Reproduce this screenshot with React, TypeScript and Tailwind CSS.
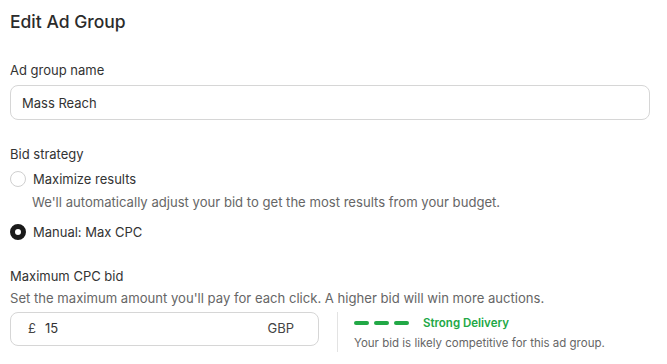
import { useState } from "react";

export default function App() {
  const [name, setName] = useState("Mass Reach");
  const [strategy, setStrategy] = useState<"auto" | "manual">("manual");
  const [bid, setBid] = useState("15");

  return (
    <main
      className="w-[667px] h-[364px] overflow-hidden bg-white px-[10px] pt-[10px] text-[#333333]"
      style={{ fontFamily: "Inter, 'Noto Sans', sans-serif" }}
    >
      <h1 className="text-[17.5px] leading-[24px] font-medium text-[#2b2b2b]">Edit Ad Group</h1>

      <label className="block mt-[27px] text-[13px] leading-[18px]">Ad group name</label>
      <input
        value={name}
        onChange={e => setName(e.target.value)}
        className="mt-[6px] w-[640px] h-[35px] rounded-[8px] border border-[#d6d6d6] px-[11px] text-[13px] outline-none"
      />

      <p className="mt-[25px] text-[13px] leading-[18px]">Bid strategy</p>

      <div className="mt-[7px] flex items-center gap-[7px] cursor-pointer" onClick={() => setStrategy("auto")}>
        <span
          className={
            strategy === "auto"
              ? "w-[16px] h-[16px] rounded-full border-[5px] border-[#1a1a1a]"
              : "w-[16px] h-[16px] rounded-full border border-[#cfcfcf]"
          }
        />
        <span className="text-[13px] leading-[18px]">Maximize results</span>
      </div>
      <p className="mt-[5px] ml-[22px] text-[13.1px] leading-[18px] text-[#666666]">
        We'll automatically adjust your bid to get the most results from your budget.
      </p>

      <div className="mt-[12px] flex items-center gap-[7px] cursor-pointer" onClick={() => setStrategy("manual")}>
        <span
          className={
            strategy === "manual"
              ? "w-[16px] h-[16px] rounded-full border-[5px] border-[#1a1a1a]"
              : "w-[16px] h-[16px] rounded-full border border-[#cfcfcf]"
          }
        />
        <span className="text-[13px] leading-[18px]">Manual: Max CPC</span>
      </div>

      <p className="mt-[26px] text-[13px] leading-[18px]">Maximum CPC bid</p>
      <p className="mt-[4px] text-[13.1px] leading-[18px] text-[#666666]">
        Set the maximum amount you'll pay for each click. A higher bid will win more auctions.
      </p>

      <div className="mt-[5px] flex items-start">
        <div className="w-[309px] h-[34px] rounded-[8px] border border-[#d6d6d6] flex items-center pl-[17px] pr-[24px] text-[13px]">
          <span className="text-[#444444]">£</span>
          <input
            value={bid}
            onChange={e => setBid(e.target.value)}
            className="ml-[9px] flex-1 min-w-0 outline-none"
          />
          <span className="text-[#444444]">GBP</span>
        </div>
        <div className="ml-[18px] h-[40px] border-l border-[#e3e3e3] pl-[16px]">
          <div className="flex items-center mt-[4px]">
            <span className="w-[15px] h-[4px] rounded-full bg-[#22a846]" />
            <span className="ml-[5px] w-[15px] h-[4px] rounded-full bg-[#22a846]" />
            <span className="ml-[5px] w-[15px] h-[4px] rounded-full bg-[#22a846]" />
            <span className="ml-[14px] text-[11.5px] leading-[14px] font-semibold text-[#22a846]">Strong Delivery</span>
          </div>
          <p className="mt-[6px] text-[11.5px] leading-[14px] text-[#666666]">
            Your bid is likely competitive for this ad group.
          </p>
        </div>
      </div>
    </main>
  );
}
